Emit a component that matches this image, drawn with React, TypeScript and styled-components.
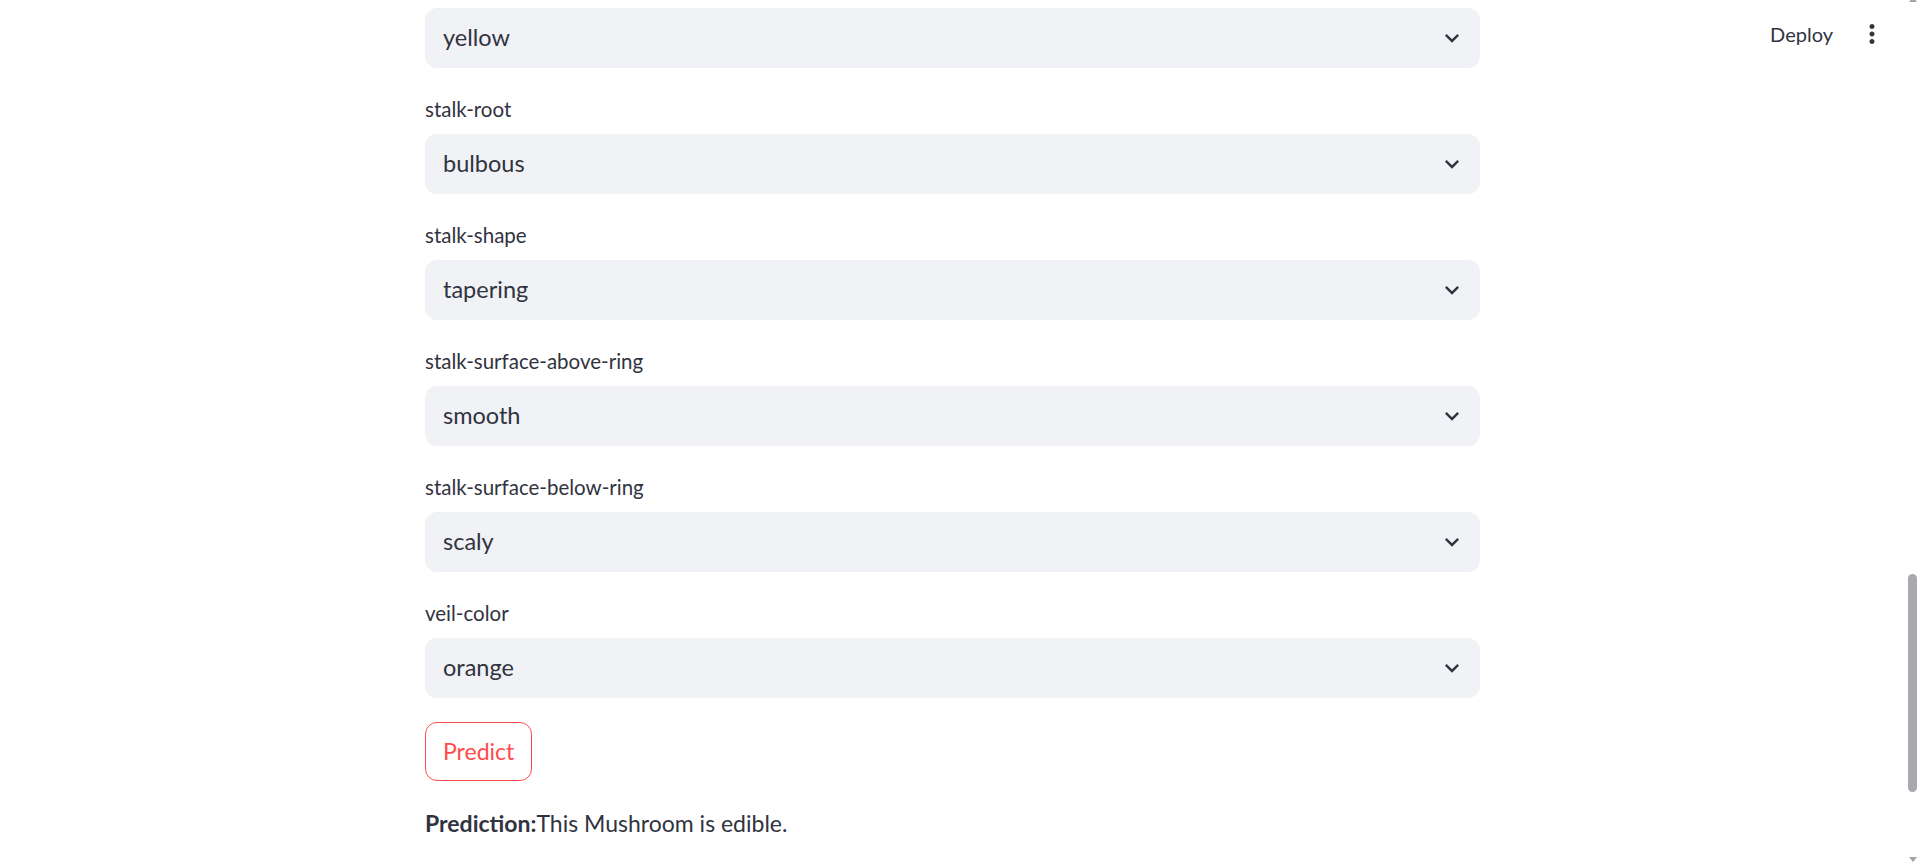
import React, { useLayoutEffect, useRef } from "react";
import styled, { createGlobalStyle } from "styled-components";

const GlobalStyle = createGlobalStyle`
  html, body {
    margin: 0;
    padding: 0;
    height: 100%;
    overflow: hidden;
    background: #ffffff;
  }
  #root {
    height: 100%;
  }
  * {
    box-sizing: border-box;
  }
`;

const FONT = `"Source Sans Pro", "Lato", "Noto Sans", sans-serif`;

const Shell = styled.div`
  position: relative;
  display: flex;
  height: 100vh;
  font-family: ${FONT};
  color: rgb(49, 51, 63);
`;

const Scroller = styled.div`
  position: relative;
  flex: 1;
  height: 100%;
  overflow-y: scroll;
  scrollbar-width: none;
  &::-webkit-scrollbar {
    display: none;
  }
`;

const Rail = styled.div`
  flex: none;
  width: 15px;
  height: 100%;
  display: flex;
  flex-direction: column;
  align-items: center;
  background: #ffffff;
`;

const ArrowUp = styled.div`
  flex: none;
  margin-top: -3px;
  width: 0;
  height: 0;
  border-left: 4.5px solid transparent;
  border-right: 4.5px solid transparent;
  border-bottom: 5px solid #a3a3a8;
`;

const Track = styled.div`
  flex: 1;
  width: 100%;
  display: flex;
  flex-direction: column;
  align-items: center;
`;

const Thumb = styled.div<{ $top: number; $size: number }>`
  margin-top: ${(p) => p.$top}px;
  width: 9px;
  height: ${(p) => p.$size}px;
  border-radius: 5px;
  background: #a8a8ad;
`;

const ArrowDown = styled.div`
  flex: none;
  margin-bottom: 1px;
  width: 0;
  height: 0;
  border-left: 4.5px solid transparent;
  border-right: 4.5px solid transparent;
  border-top: 5px solid #a3a3a8;
`;

const Main = styled.main`
  width: 1055px;
  margin: 0 auto;
  padding: 144px 0 238px;
  display: flex;
  flex-direction: column;
  gap: 24px;
`;

const Title = styled.h1`
  margin: 0;
  padding: 18px 0 24px;
  font-size: 66px;
  font-weight: 700;
  line-height: 1.2;
`;

const Intro = styled.p`
  margin: 0;
  font-size: 24px;
  line-height: 1.6;
`;

const Field = styled.div`
  display: flex;
  flex-direction: column;
`;

const Label = styled.label`
  display: flex;
  align-items: center;
  min-height: 36px;
  margin-bottom: 6px;
  font-size: 20.5px;
  line-height: 1.6;
`;

const SelectBox = styled.div`
  display: flex;
  align-items: center;
  justify-content: space-between;
  height: 60px;
  padding: 0 14px 0 18px;
  border-radius: 12px;
  background: rgb(240, 242, 246);
  font-size: 23.5px;
  cursor: pointer;
`;

const Value = styled.span`
  line-height: 1.4;
`;

const Chevron = styled.svg`
  width: 28px;
  height: 28px;
  fill: rgb(49, 51, 63);
  flex: none;
`;

const ButtonRow = styled.div`
  display: flex;
`;

const Button = styled.button`
  height: 59px;
  padding: 0 17px;
  border: 1.5px solid rgb(255, 75, 75);
  border-radius: 12px;
  background: #ffffff;
  color: rgb(255, 75, 75);
  font-family: ${FONT};
  font-size: 23px;
  cursor: pointer;
`;

const Result = styled.p`
  margin: 0;
  font-size: 23px;
  line-height: 1.65;
`;

const Header = styled.header`
  position: absolute;
  top: 0;
  right: 33px;
  height: 68px;
  display: flex;
  align-items: center;
  gap: 24px;
  font-family: ${FONT};
  color: rgb(49, 51, 63);
`;

const DeployButton = styled.button`
  border: none;
  background: transparent;
  padding: 0;
  font-family: ${FONT};
  font-size: 20px;
  color: rgb(49, 51, 63);
  cursor: pointer;
`;

const MenuIcon = styled.svg`
  width: 30px;
  height: 30px;
  fill: rgb(49, 51, 63);
`;

type Item = { label: string; value: string };

const before: Item[] = [
  { label: "cap-shape", value: "convex" },
  { label: "cap-surface", value: "smooth" },
  { label: "cap-color", value: "brown" },
  { label: "bruises", value: "bruises" },
  { label: "odor", value: "none" },
  { label: "gill-attachment", value: "free" },
  { label: "gill-spacing", value: "close" },
  { label: "gill-size", value: "broad" },
  { label: "gill-color", value: "white" },
  { label: "ring-number", value: "one" },
  { label: "ring-type", value: "pendant" },
  { label: "population", value: "several" },
  { label: "habitat", value: "woods" },
  { label: "stalk-color-above-ring", value: "white" },
  { label: "spore-print-color", value: "yellow" },
];

const visible: Item[] = [
  { label: "stalk-root", value: "bulbous" },
  { label: "stalk-shape", value: "tapering" },
  { label: "stalk-surface-above-ring", value: "smooth" },
  { label: "stalk-surface-below-ring", value: "scaly" },
  { label: "veil-color", value: "orange" },
];

const ChevronIcon = () => (
  <Chevron viewBox="0 0 24 24" aria-hidden="true">
    <path d="M16.59 8.59L12 13.17 7.41 8.59 6 10l6 6 6-6z" />
  </Chevron>
);

const Select = React.forwardRef<HTMLDivElement, Item>(({ label, value }, ref) => (
  <Field>
    <Label>{label}</Label>
    <SelectBox ref={ref}>
      <Value>{value}</Value>
      <ChevronIcon />
    </SelectBox>
  </Field>
));

export default function App() {
  const scrollerRef = useRef<HTMLDivElement>(null);
  const anchorRef = useRef<HTMLDivElement>(null);

  useLayoutEffect(() => {
    const s = scrollerRef.current;
    const a = anchorRef.current;
    if (s && a) {
      const top = a.getBoundingClientRect().top - s.getBoundingClientRect().top;
      s.scrollTop = top - 8;
    }
  }, []);

  return (
    <Shell>
      <GlobalStyle />
      <Scroller ref={scrollerRef}>
        <Main>
          <Title>Mushroom Classification</Title>
          <Intro>Choose the characteristics of the mushroom to find out whether it is edible or poisonous.</Intro>
          {before.map((it, i) => (
            <Select
              key={it.label}
              label={it.label}
              value={it.value}
              ref={i === before.length - 1 ? anchorRef : undefined}
            />
          ))}
          {visible.map((it) => (
            <Select key={it.label} label={it.label} value={it.value} />
          ))}
          <ButtonRow>
            <Button>Predict</Button>
          </ButtonRow>
          <Result>
            <strong>Prediction:</strong>This Mushroom is edible.
          </Result>
        </Main>
      </Scroller>
      <Rail>
        <ArrowUp />
        <Track>
          <Thumb $top={572} $size={218} />
        </Track>
        <ArrowDown />
      </Rail>
      <Header>
        <DeployButton>Deploy</DeployButton>
        <MenuIcon viewBox="0 0 24 24" aria-hidden="true">
          <path d="M12 8c1.1 0 2-.9 2-2s-.9-2-2-2-2 .9-2 2 .9 2 2 2zm0 2c-1.1 0-2 .9-2 2s.9 2 2 2 2-.9 2-2-.9-2-2-2zm0 6c-1.1 0-2 .9-2 2s.9 2 2 2 2-.9 2-2-.9-2-2-2z" />
        </MenuIcon>
      </Header>
    </Shell>
  );
}
